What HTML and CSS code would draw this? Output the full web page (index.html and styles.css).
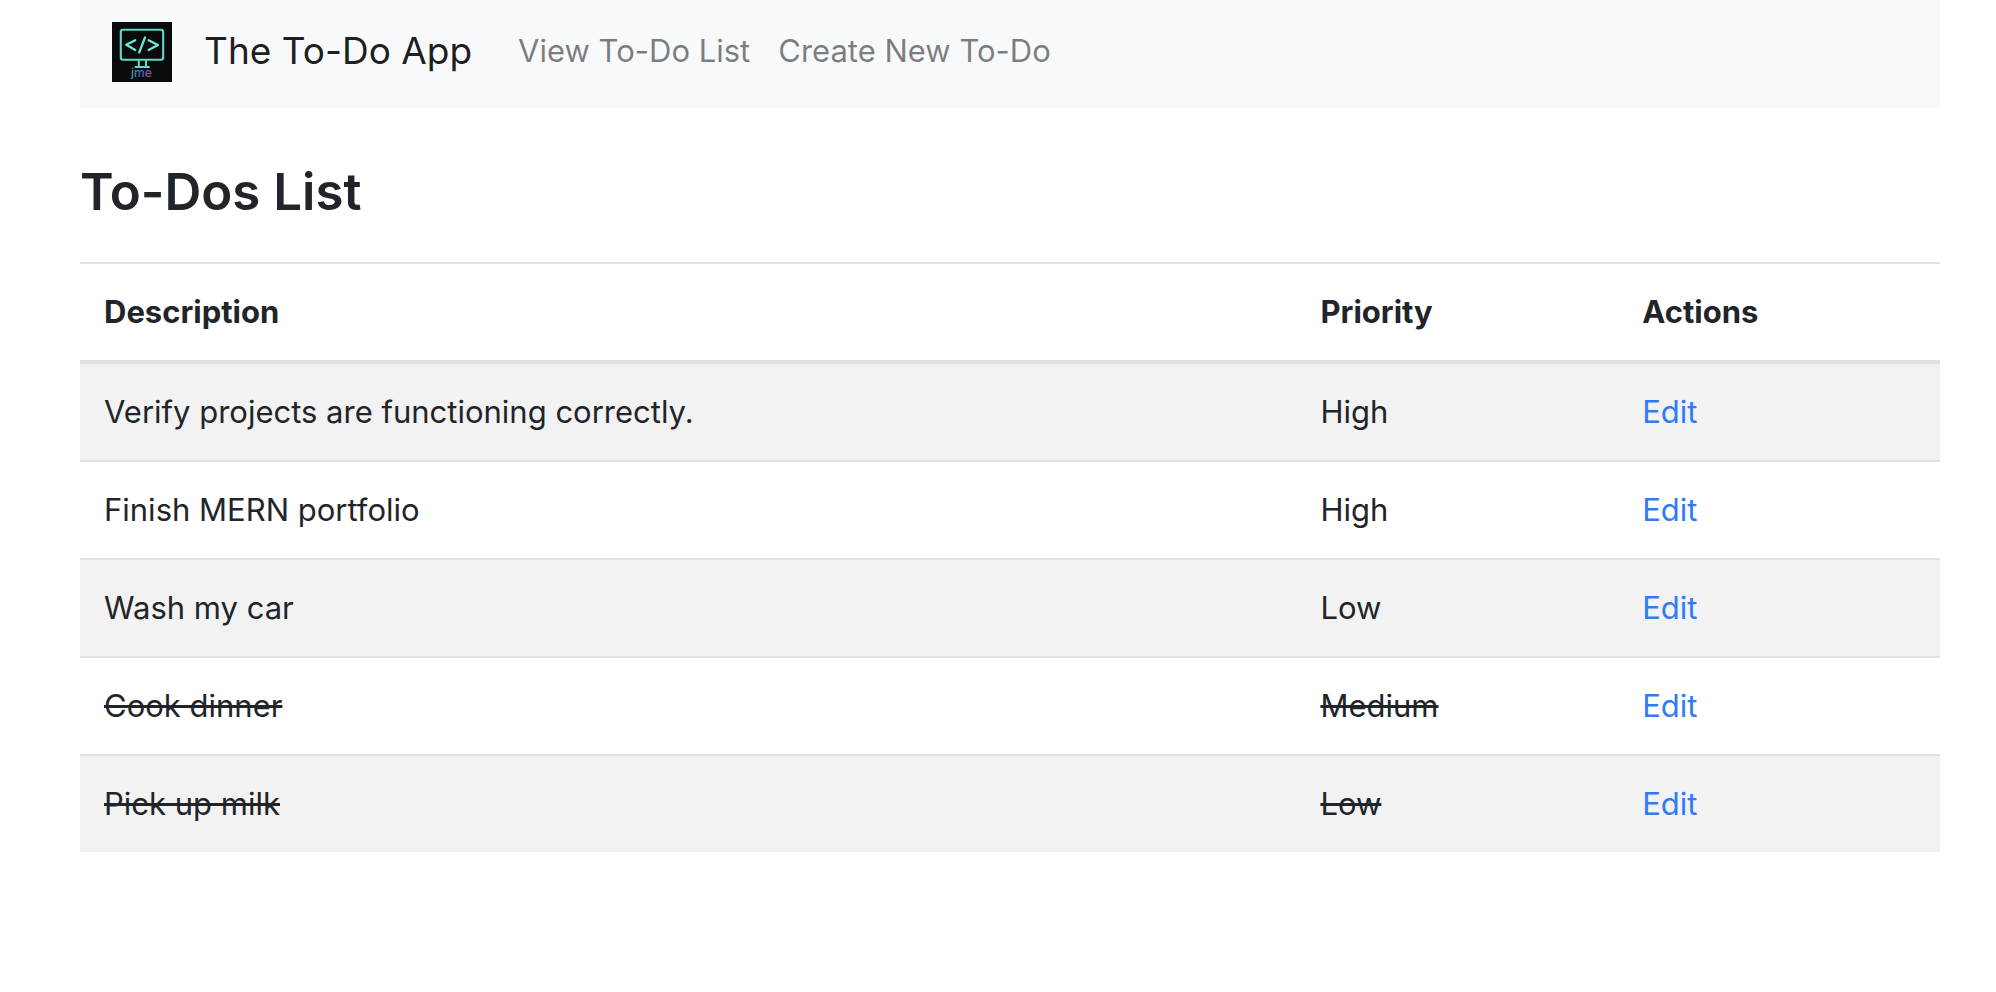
FILE: index.html
```html
<!DOCTYPE html>
<html lang="en">
<head>
<meta charset="utf-8">
<title>The To-Do App</title>
<meta name="viewport" content="width=device-width, initial-scale=1">
<link rel="stylesheet" href="styles.css">
</head>
<body>
<div class="container">
  <nav class="navbar">
    <a class="navbar-logo" href="#" aria-label="jme">
      <svg class="logo" viewBox="0 0 60 60" aria-hidden="true">
        <defs>
          <linearGradient id="sign" x1="0" x2="1" y1="0" y2="0">
            <stop offset="0" stop-color="#4aa79f"/>
            <stop offset="0.45" stop-color="#3b68cc"/>
            <stop offset="1" stop-color="#9a55a8"/>
          </linearGradient>
        </defs>
        <rect width="60" height="60" fill="#090a0b"/>
        <g fill="none" stroke="#62d9c8" stroke-linecap="round" stroke-linejoin="round">
          <rect x="8.8" y="7.8" width="42.4" height="30" rx="2.2" stroke-width="2.1"/>
          <path d="M26.8 38v6.6M34 38v6.6M23.5 45h13.5" stroke-width="2"/>
          <path d="M23.3 18.2L14.2 22.8L23.3 28M33 15.5L27.2 30.5M36.6 18.2L46 23L36.6 28" stroke-width="2.2" stroke="#70ead8"/>
        </g>
        <text class="logo-text" x="19" y="55" fill="url(#sign)">jme</text>
      </svg>
    </a>
    <a class="navbar-brand" href="#">The To-Do App</a>
    <ul class="navbar-nav">
      <li><a class="nav-link" href="#">View To-Do List</a></li>
      <li><a class="nav-link" href="#">Create New To-Do</a></li>
    </ul>
  </nav>
  <main>
    <h1 class="title">To-Dos List</h1>
    <table class="table">
      <thead>
        <tr><th class="col-description" scope="col">Description</th><th scope="col">Priority</th><th scope="col">Actions</th></tr>
      </thead>
      <tbody>
        <tr><td>Verify projects are functioning correctly.</td><td>High</td><td><a class="edit" href="#">Edit</a></td></tr>
        <tr><td>Finish MERN portfolio</td><td>High</td><td><a class="edit" href="#">Edit</a></td></tr>
        <tr><td>Wash my car</td><td>Low</td><td><a class="edit" href="#">Edit</a></td></tr>
        <tr><td class="completed">Cook dinner</td><td class="completed">Medium</td><td><a class="edit" href="#">Edit</a></td></tr>
        <tr><td class="completed">Pick up milk</td><td class="completed">Low</td><td><a class="edit" href="#">Edit</a></td></tr>
      </tbody>
    </table>
  </main>
</div>
</body>
</html>
```
FILE: styles.css
```css
* {
  box-sizing: border-box;
}

body {
  margin: 0;
  background: #fff;
  color: #212529;
  font-family: Inter, "Liberation Sans", sans-serif;
  font-size: 31px;
  line-height: 48px;
}

a {
  text-decoration: none;
}

.container {
  padding: 0 56px 0 80px;
}

.navbar {
  display: flex;
  align-items: center;
  padding: 22px 32px 26px;
  background: #f8f9fb;
}

.navbar-logo {
  display: block;
  margin-right: 32px;
}

.logo {
  display: block;
  width: 60px;
  height: 60px;
}

.logo-text {
  font-size: 12px;
  font-weight: 500;
}

.navbar-brand {
  margin-right: 46px;
  padding-bottom: 2px;
  color: rgba(0, 0, 0, 0.9);
  font-size: 37px;
}

.navbar-nav {
  display: flex;
  gap: 28px;
  margin: 0;
  padding: 0 0 2px;
  list-style: none;
}

.nav-link {
  color: rgba(0, 0, 0, 0.5);
}

.title {
  margin: 50px 0 36px;
  font-size: 51px;
  font-weight: 600;
  line-height: 68px;
}

.table {
  width: 100%;
  table-layout: fixed;
  border-spacing: 0;
}

.table th,
.table td {
  padding: 24px;
  border-top: 2px solid #dee2e6;
  text-align: left;
}

.table th {
  border-bottom: 4px solid #dee2e6;
  font-weight: 700;
}

.col-description {
  width: 65.4%;
}

.table tbody tr:first-child td {
  border-top: 0;
}

.table tbody tr:nth-child(odd) {
  background: #f2f2f2;
}

.completed {
  text-decoration: line-through;
}

.edit {
  color: #2f7cf6;
}
```
